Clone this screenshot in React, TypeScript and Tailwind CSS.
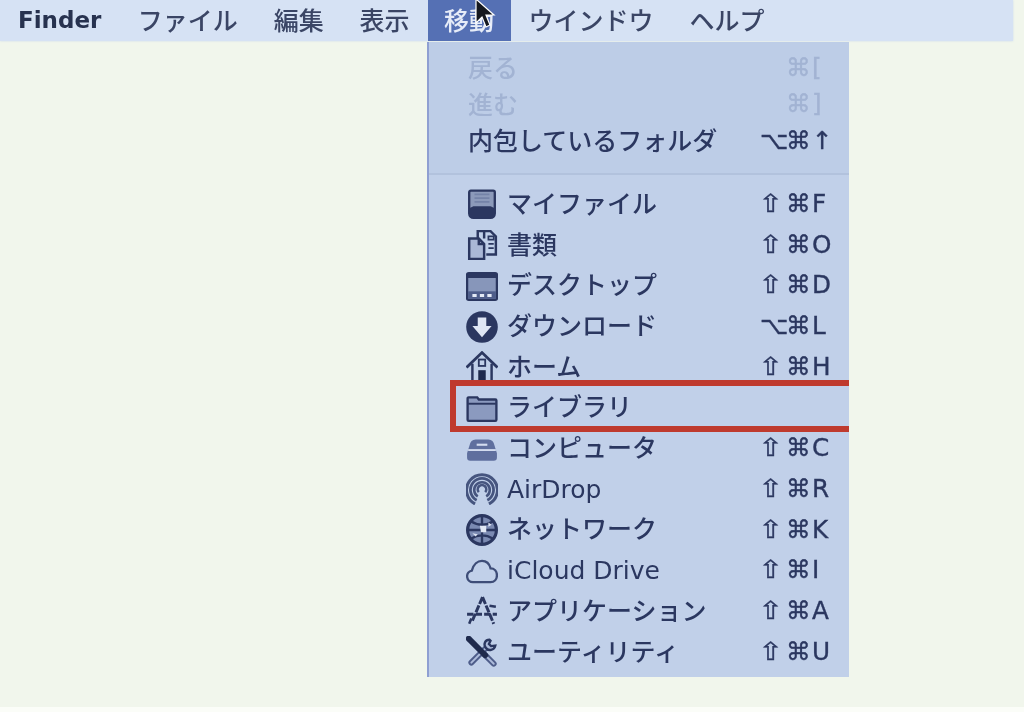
import React from "react";

const INK = "#2b3760";
const box = "w-[32px] h-[32px] shrink-0 -my-[2px] -ml-[1px] -mr-[1px]";

const Drive = () => (
  <svg viewBox="0 0 30 30" className={box}>
    <path d="M4.500 2.500h21a1.500 1.500 0 0 1 1.500 1.500V24a4 4 0 0 1-4 4H7a4 4 0 0 1-4-4V4a1.500 1.500 0 0 1 1.500-1.500z" fill="#8c9aba" stroke={INK} strokeWidth="2.200" />
    <path d="M3 19l4-2h16l4 2v6a3 3 0 0 1-3 3H6a3 3 0 0 1-3-3z" fill={INK} />
    <path d="M8 6h14M8 9.500h14M8 13h14" stroke="#7483a8" strokeWidth="1.600" />
  </svg>
);
const Docs = () => (
  <svg viewBox="0 0 30 30" className={box} fill="none" stroke={INK} strokeWidth="2.300">
    <path d="M3 9h9l5 5v14H3z" fill="#aab8d6" />
    <path d="M12 9v5h5" />
    <path d="M11 9V2h6v7" />
    <path d="M17 2h6l5 5v17h-9" />
    <path d="M21 7h5v3h-5zM21 14h5M21 18h5" strokeWidth="1.600" />
  </svg>
);
const Desktop = () => (
  <svg viewBox="0 0 30 30" className={box}>
    <rect x="1" y="3" width="28" height="25" rx="1.500" fill="#8796ba" stroke={INK} strokeWidth="2.200" />
    <rect x="1" y="3" width="28" height="4.500" fill={INK} />
    <rect x="2" y="20" width="26" height="7" fill="#4e5d8a" />
    <path d="M6 24h4M13 24h4M20 24h4" stroke="#e4eaf6" strokeWidth="2.800" />
  </svg>
);
const Download = () => (
  <svg viewBox="0 0 30 30" className={box}>
    <circle cx="15" cy="15" r="14.800" fill={INK} />
    <path d="M11 6h8v8h5L15 24.500 6 14h5z" fill="#dfe6f4" />
  </svg>
);
const Home = () => (
  <svg viewBox="0 0 30 30" className={box} fill="none" stroke={INK}>
    <path d="M0.500 15.500L15 1.500l14.500 14" strokeWidth="2.600" />
    <path d="M6 12v17h18V12" strokeWidth="2.300" />
    <rect x="11.500" y="18" width="7" height="11" fill="#1f2a4d" stroke="none" />
    <rect x="12" y="8" width="6" height="6" strokeWidth="1.700" />
  </svg>
);
const Folder = () => (
  <svg viewBox="0 0 30 30" className={box}>
    <path d="M1.500 6a1 1 0 0 1 1-1h8l1.500 2h15.500a1 1 0 0 1 1 1V26a1 1 0 0 1-1 1h-25a1 1 0 0 1-1-1z" fill="#8b9abf" stroke={INK} strokeWidth="2.200" />
    <path d="M2 11h26" stroke={INK} strokeWidth="1.800" />
  </svg>
);
const Computer = () => (
  <svg viewBox="0 0 30 30" className={box}>
    <path d="M9 6h12a6 6 0 0 1 5.500 5l2.500 8v4a3 3 0 0 1-3 3H4a3 3 0 0 1-3-3v-4l2.500-8A6 6 0 0 1 9 6z" fill="#5f6f9e" />
    <path d="M2 16h26" stroke="#d3dcef" strokeWidth="1.800" />
    <path d="M10 11h10" stroke="#d3dcef" strokeWidth="2" />
  </svg>
);
const AirDrop = () => (
  <svg viewBox="0 0 30 30" className={box} fill="none" stroke="#46557f">
    <path d="M8.500 29A14.500 14.500 0 1 1 21.500 29" strokeWidth="2.800" />
    <path d="M10 25.500A10.800 10.800 0 1 1 20 25.500" strokeWidth="2.600" />
    <path d="M11 22A7.300 7.300 0 1 1 19 22" strokeWidth="2.400" />
    <path d="M12 18a4 4 0 1 1 6 0" strokeWidth="2.400" />
  </svg>
);
const Globe = () => (
  <svg viewBox="0 0 30 30" className={box}>
    <circle cx="15" cy="15" r="13.500" fill="#7b8ab2" stroke={INK} strokeWidth="3" />
    <path d="M15 2v26M2 15h26M5 7c6 4 14 4 20 0M5 23c6-4 14-4 20 0" fill="none" stroke={INK} strokeWidth="2.200" />
    <path d="M13 11h6v6h-5z" fill="#e2e8f5" />
    <path d="M6 18l3 3 2-2zM21 8l3 2-3 2z" fill="#dbe2f2" />
  </svg>
);
const Cloud = () => (
  <svg viewBox="0 0 30 30" className={box} fill="none" stroke="#3e4d78" strokeWidth="2.200">
    <path d="M6.500 25.500a5.500 5.500 0 0 1-1-10.900C7 8.500 11 5.500 15 5.500c4 0 7 3 8 7 3.500 0 6 2.700 6 6.500s-2.500 6.500-6 6.500z" />
  </svg>
);
const Apps = () => (
  <svg viewBox="0 0 30 30" className={box} fill="none" stroke={INK}>
    <path d="M15.500 2L6 24M15.500 2L26 27" strokeWidth="2.800" strokeDasharray="7 1.500" />
    <path d="M1 18h28" strokeWidth="2.800" strokeDasharray="6 2" />
    <path d="M5 22l-2 5M22 10l6 1" strokeWidth="2.400" />
  </svg>
);
const Tools = () => (
  <svg viewBox="0 0 30 30" className={box} fill="none" strokeLinecap="round">
    <path d="M17 17l9 9" stroke="#4e5d8a" strokeWidth="5.500" />
    <path d="M17 17l9 9" stroke="#aebcdb" strokeWidth="1.800" />
    <path d="M18 12L5 25" stroke="#4e5d8a" strokeWidth="5.500" />
    <path d="M18 12L5 25" stroke="#aebcdb" strokeWidth="1.800" />
    <path d="M2.500 2.500L18 18" stroke="#1f2a4d" strokeWidth="5.500" />
    <path d="M22 3.500c-4 0-6 4-3.500 7.500s8 2.500 9-2l-4 .5-2-2 1.500-3z" fill="#aebcdb" stroke={INK} strokeWidth="2.200" strokeLinecap="butt" />
  </svg>
);

const top = [
  { label: "戻る", keys: ["", "⌘", "["], off: true },
  { label: "進む", keys: ["", "⌘", "]"], off: true },
  { label: "内包しているフォルダ", keys: ["⌥", "⌘", "↑"], off: false },
];

const items: { label: string; icon: React.ReactNode; keys?: string[] }[] = [
  { label: "マイファイル", icon: <Drive />, keys: ["⇧", "⌘", "F"] },
  { label: "書類", icon: <Docs />, keys: ["⇧", "⌘", "O"] },
  { label: "デスクトップ", icon: <Desktop />, keys: ["⇧", "⌘", "D"] },
  { label: "ダウンロード", icon: <Download />, keys: ["⌥", "⌘", "L"] },
  { label: "ホーム", icon: <Home />, keys: ["⇧", "⌘", "H"] },
  { label: "ライブラリ", icon: <Folder /> },
  { label: "コンピュータ", icon: <Computer />, keys: ["⇧", "⌘", "C"] },
  { label: "AirDrop", icon: <AirDrop />, keys: ["⇧", "⌘", "R"] },
  { label: "ネットワーク", icon: <Globe />, keys: ["⇧", "⌘", "K"] },
  { label: "iCloud Drive", icon: <Cloud />, keys: ["⇧", "⌘", "I"] },
  { label: "アプリケーション", icon: <Apps />, keys: ["⇧", "⌘", "A"] },
  { label: "ユーティリティ", icon: <Tools />, keys: ["⇧", "⌘", "U"] },
];

const Keys = ({ keys }: { keys?: string[] }) => (
  <div className="w-[89px] shrink-0 flex items-center text-[24.700px] leading-none [-webkit-text-stroke:0.35px]">
    {keys?.map((k, i) => (
      <span
        key={i}
        className={
          i === 2
            ? ""
            : i === 1
            ? "w-[26px]"
            : k === "⇧"
            ? "w-[28px] -ml-[2px] inline-block origin-left scale-x-[1.200]"
            : "w-[26px] inline-block"
        }
      >
        {k}
      </span>
    ))}
  </div>
);

const menus = ["ファイル", "編集", "表示", "移動", "ウインドウ", "ヘルプ"];

export default function App() {
  return (
    <div className="w-[1024px] h-[712px] overflow-hidden bg-[#fbfdf8]">
      <div
        className="relative w-[1024px] h-[707px] bg-[#f1f6ec] blur-[0.6px] text-[#2b3760] text-[25px] leading-none font-medium"
        style={{ fontFamily: '"DejaVu Sans", "Noto Sans CJK JP", sans-serif' }}
      >
        <div className="w-[1013px] h-[41px] flex items-center bg-[#d6e2f4] shadow-[0_0_2px_#ccd9ec]">
          <div className="pl-[18px] pr-[18.500px] font-bold text-[23px] text-[#27324f]">Finder</div>
          {menus.map((m) =>
            m === "移動" ? (
              <div key={m} className="h-full flex items-center px-[16.500px] pt-[2px] bg-[#5570b4] text-[#e6ecf8]">{m}</div>
            ) : (
              <div key={m} className="px-[17.950px] pt-[2px] text-[#3a4565]">{m}</div>
            )
          )}
        </div>

        <div className="relative ml-[427px] mt-[1px] w-[422px] h-[635px] border-l-2 border-[#8f9fd2] bg-[#c1d0e9] overflow-hidden">
          <div className="pt-[8px] pb-[13px] bg-[#bdcde7] border-b-2 border-[#b2c2dd]">
            {top.map((r) => (
              <div key={r.label} className={`h-[36.500px] flex items-center pl-[39px] ${r.off ? "text-[#a2b3d3]" : "text-[#2b3760]"}`}>
                <div className="flex-1 pt-[1px]">{r.label}</div>
                <Keys keys={r.keys} />
              </div>
            ))}
          </div>
          <div className="pt-[9.600px]">
            {items.map((r) => (
              <div key={r.label} className="h-[40.700px] flex items-center pl-[38px]">
                <div className="flex-1 flex items-center gap-[10px]">
                  {r.icon}
                  <span>{r.label}</span>
                </div>
                <Keys keys={r.keys} />
              </div>
            ))}
          </div>
          <div className="absolute left-[21px] right-0 top-[338px] h-[52px] border-[6px] border-r-0 border-[#bf3a2e]" />
        </div>

        <svg viewBox="0 0 22 32" className="absolute left-[474px] top-[-2px] w-[22px] h-[32px]">
          <path d="M2 1v24l6-6 4 10 4-2-4-10h8z" fill="#15181f" stroke="#ffffff" strokeWidth="1.200" />
        </svg>
      </div>
    </div>
  );
}
